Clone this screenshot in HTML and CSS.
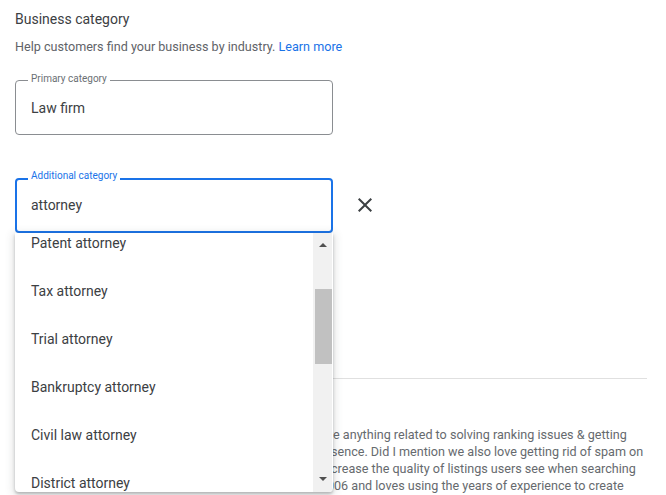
FILE: index.html
```html
<!DOCTYPE html>
<html>
<head>
<meta charset="utf-8">
<link rel="stylesheet" href="styles.css">
</head>
<body>
<div class="page">
  <h2 class="title">Business category</h2>
  <p class="help">Help customers find your business by industry. <a class="link" href="#">Learn more</a></p>

  <div class="field">
    <span class="label">Primary category</span>
    <span class="value">Law firm</span>
  </div>

  <div class="row">
    <div class="field-wrap">
      <div class="field focused">
        <span class="label">Additional category</span>
        <span class="value">attorney</span>
      </div>
      <div class="menu">
        <ul class="options">
          <li class="option">Patent attorney</li>
          <li class="option">Tax attorney</li>
          <li class="option">Trial attorney</li>
          <li class="option">Bankruptcy attorney</li>
          <li class="option">Civil law attorney</li>
          <li class="option">District attorney</li>
        </ul>
        <div class="scrollbar">
          <span class="arrow up"></span>
          <span class="thumb"></span>
          <span class="arrow down"></span>
        </div>
      </div>
    </div>
    <button class="clear" aria-label="Remove">
      <svg width="24" height="24" viewBox="0 0 24 24"><path d="M19 6.41L17.59 5 12 10.59 6.41 5 5 6.41 10.59 12 5 17.59 6.41 19 12 13.41 17.59 19 19 17.59 13.41 12z" fill="#3c4043"/></svg>
    </button>
  </div>

  <hr class="divider">

  <div class="about">
    <h3 class="about-title">From the business</h3>
    <div class="line"><span class="pre p1">We lo</span><span>ve anything related to solving ranking issues &amp; getting</span></div>
    <div class="line"><span class="pre p2">pre</span><span>sence. Did I mention we also love getting rid of spam on</span></div>
    <div class="line"><span class="pre p3">in</span><span>crease the quality of listings users see when searching</span></div>
    <div class="line"><span class="pre p4">20</span><span>06 and loves using the years of experience to create</span></div>
  </div>
</div>
</body>
</html>
```
FILE: styles.css
```css
* { box-sizing: border-box; }
html, body { margin: 0; padding: 0; background: #fff; }
body { font-family: Roboto, "Noto Sans", Arial, sans-serif; color: #3c4043; }
.page { padding: 9px 20px 0 15px; width: 666px; height: 495px; overflow: hidden; }
.title { margin: 0; font-size: 14px; font-weight: 400; line-height: 20px; color: #3c4043; }
.help { margin: 10px 0 0; font-size: 12.6px; line-height: 16px; color: #5f6368; }
.link { color: #1a73e8; text-decoration: none; }

.field {
  position: relative;
  width: 318px;
  height: 55px;
  margin-top: 25px;
  border: 1px solid #8a8d91;
  border-radius: 4px;
  display: flex;
  align-items: center;
  padding-left: 15px;
}
.label {
  position: absolute;
  left: 12px;
  top: -9px;
  padding: 0 3px;
  background: #fff;
  font-size: 10px;
  line-height: 14px;
  color: #6b6f74;
}
.value { font-size: 14px; color: #3c4043; line-height: 20px; }

.row { display: flex; align-items: flex-start; gap: 20px; margin-top: 43px; }
.field-wrap { position: relative; }
.row .field { margin-top: 0; }
.field.focused { border: 2px solid #1a73e8; padding-left: 14px; padding-bottom: 1px; }
.field.focused .label { color: #1a73e8; left: 11px; top: -11px; }

.clear {
  margin-top: 15px;
  padding: 0;
  border: 0;
  background: none;
  width: 24px;
  height: 24px;
  display: flex;
}

.menu {
  position: absolute;
  left: 0;
  top: 55px;
  width: 318px;
  height: 259px;
  background: #fff;
  overflow: hidden;
  z-index: 2;
  border-radius: 0 0 4px 4px;
  box-shadow: 0 2px 3px rgba(60,64,67,.3), 0 2px 8px 2px rgba(60,64,67,.15);
}
.options { list-style: none; margin: -14px 0 0; padding: 0; }
.option {
  height: 48px;
  display: flex;
  align-items: center;
  padding-left: 16px;
  font-size: 14px;
  color: #3c4043;
}
.scrollbar {
  position: absolute;
  top: 0;
  right: 1px;
  width: 19px;
  height: 100%;
  background: #f1f1f1;
}
.thumb {
  position: absolute;
  left: 2px;
  right: 0;
  top: 56px;
  height: 75px;
  background: #c1c1c1;
}
.arrow {
  position: absolute;
  left: 6px;
  width: 0;
  height: 0;
  border-left: 4px solid transparent;
  border-right: 4px solid transparent;
}
.arrow.up { top: 10px; border-bottom: 4px solid #505050; }
.arrow.down { bottom: 11px; border-top: 4px solid #505050; }

.divider {
  margin: 145px 0 0;
  border: 0;
  border-top: 1px solid #e0e0e0;
  width: 632px;
}
.about { position: relative; }
.about-title { margin: 18px 0 0; font-size: 14px; font-weight: 400; line-height: 20px; color: #3c4043; }
.line {
  display: flex;
  font-size: 12.6px;
  line-height: 17px;
  color: #666a6e;
  white-space: nowrap;
}
.line:first-of-type { margin-top: 9px; }
.pre { text-align: right; flex: none; }
.p1 { width: 312px; }
.p2 { width: 316px; }
.p3 { width: 316px; }
.p4 { width: 319px; }
```
